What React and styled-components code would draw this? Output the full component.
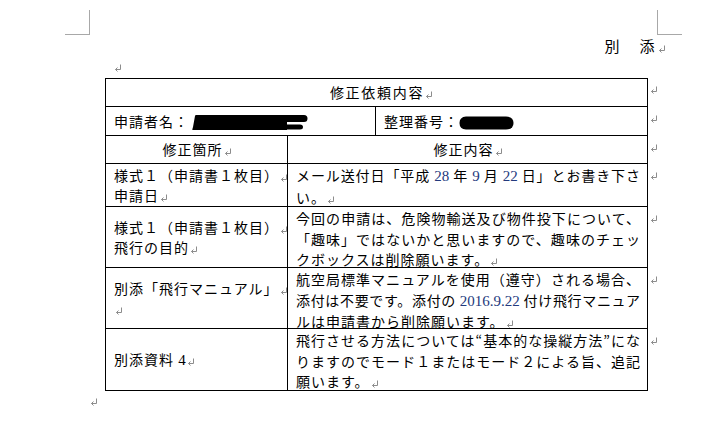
import React from "react";
import styled, { createGlobalStyle } from "styled-components";

const GlobalStyle = createGlobalStyle`
  html, body {
    margin: 0;
    padding: 0;
    background: #ffffff;
  }
  body {
    font-family: "Noto Sans CJK JP", "Noto Sans", sans-serif;
    font-weight: 400;
    color: #000;
    text-spacing-trim: space-all;
    text-autospace: no-autospace;
  }
`;

// page with the word-style margin corner marks
const Page = styled.div`
  position: relative;
  width: 568px;
  padding: 35px 0 0 89px;

  &::before,
  &::after {
    content: "";
    position: absolute;
    top: 10px;
    width: 24px;
    height: 24px;
    border-bottom: 1px solid #a8a8a8;
  }
  &::before {
    left: 65px;
    border-right: 1px solid #a8a8a8;
  }
  &::after {
    left: 657px;
    border-left: 1px solid #a8a8a8;
  }
`;

const Attachment = styled.p`
  margin: 0;
  height: 22px;
  line-height: 22px;
  font-size: 15px;
  letter-spacing: 2.5px;
  text-align: right;
`;

const BlankPara = styled.p`
  margin: 0;
  height: 21px;
  padding-left: ${(p) => p.$indent || 0}px;
  display: flex;
  align-items: center;
`;

const Table = styled.div`
  display: grid;
  grid-template-columns: 182px 88px 272px 16px;
  grid-template-rows: 29px 29px 28px 43px 61px 61px 62px;
  width: max-content;
  margin-left: 16px;
  border-left: 1px solid #000;
  font-size: 14px;
  letter-spacing: 1px;
  line-height: 20.5px;
`;

const Cell = styled.div`
  grid-column: ${(p) => p.$cols};
  display: flex;
  flex-direction: column;
  min-width: 0;
  padding: 0 7px 0 8px;
  border-right: 1px solid #000;
  border-bottom: 1px solid #000;
`;

const TitleCell = styled(Cell)`
  border-top: 1px solid #000;
  align-items: center;
  justify-content: center;
  letter-spacing: 1.7px;
`;

const FieldCell = styled(Cell)`
  justify-content: center;
`;

const HeadCell = styled(Cell)`
  align-items: center;
  justify-content: center;
`;

const PlaceCell = styled(Cell)`
  justify-content: center;
`;

const BodyCell = styled(Cell)`
  padding-top: 1px;
`;

const RowEnd = styled.div`
  grid-column: 4;
  display: flex;
  align-items: flex-start;
  padding: 8px 0 0 1px;
`;

const Line = styled.div`
  white-space: nowrap;
`;

const FillLine = styled.div`
  text-align: justify;
  text-align-last: justify;
  letter-spacing: 0;
`;

const Num = styled.span`
  font-family: "Liberation Serif", serif;
  font-size: 15px;
  letter-spacing: 0;
  color: ${(p) => (p.$blue ? "#23397d" : "inherit")};
`;

const MarkSvg = styled.svg`
  display: inline-block;
  flex: none;
  width: 8px;
  height: 8px;
  margin-left: 1px;
  margin-right: ${(p) => (p.$hang ? "-9px" : "0")};
  vertical-align: -1px;
`;

const Redaction = styled.svg`
  display: inline-block;
  margin-left: ${(p) => p.$gap}px;
  vertical-align: -3px;
`;

function ParaMark({ hang }) {
  return (
    <MarkSvg $hang={hang} viewBox="0 0 8 8">
      <path
        d="M6.5 0.5V5.5H1.5M3.5 3.5L1.5 5.5L3.5 7.5"
        fill="none"
        stroke="#8c8c8c"
        strokeWidth="1"
      />
    </MarkSvg>
  );
}

function NameBlot() {
  return (
    <Redaction $gap={3} width="116" height="15" viewBox="0 0 116 15">
      <path
        d="M4 0H112Q115.5 0 115.5 3.5Q115.5 7 112 7H95V9.5H108Q111 9.5 111 12Q111 14.5 108 14.5H95V15H0.5Q0 15 1 12L3 1Q3.3 0 4 0Z"
        fill="#000"
      />
    </Redaction>
  );
}

function NumberBlot() {
  return (
    <Redaction $gap={0} width="55" height="14" viewBox="0 0 55 14">
      <path
        d="M7 0.5H47Q54.5 1 54.5 7Q54.5 13.5 47 13.5H7Q0.5 13 0.5 7Q0.5 1 7 0.5Z"
        fill="#000"
      />
    </Redaction>
  );
}

export default function App() {
  return (
    <>
      <GlobalStyle />
      <Page>
        <Attachment>
          別　添
          <ParaMark hang />
        </Attachment>
        <BlankPara $indent={24}>
          <ParaMark />
        </BlankPara>

        <Table>
          <TitleCell $cols="1 / 4">
            <Line>
              修正依頼内容
              <ParaMark hang />
            </Line>
          </TitleCell>
          <RowEnd>
            <ParaMark />
          </RowEnd>

          <FieldCell $cols="1 / 3">
            <Line>
              申請者名：
              <NameBlot />
            </Line>
          </FieldCell>
          <FieldCell $cols="3 / 4">
            <Line>
              整理番号：
              <NumberBlot />
            </Line>
          </FieldCell>
          <RowEnd>
            <ParaMark />
          </RowEnd>

          <HeadCell $cols="1 / 2">
            <Line>
              修正箇所
              <ParaMark />
            </Line>
          </HeadCell>
          <HeadCell $cols="2 / 4">
            <Line>
              修正内容
              <ParaMark />
            </Line>
          </HeadCell>
          <RowEnd>
            <ParaMark />
          </RowEnd>

          <PlaceCell $cols="1 / 2">
            <Line>
              様式１（申請書１枚目）
              <ParaMark />
            </Line>
            <Line>
              申請日
              <ParaMark />
            </Line>
          </PlaceCell>
          <BodyCell $cols="2 / 4">
            <FillLine>
              メール送付日「平成 <Num $blue>28</Num> 年 <Num $blue>9</Num> 月{" "}
              <Num $blue>22</Num> 日」とお書き下さ
            </FillLine>
            <Line>
              い。
              <ParaMark />
            </Line>
          </BodyCell>
          <RowEnd>
            <ParaMark />
          </RowEnd>

          <PlaceCell $cols="1 / 2">
            <Line>
              様式１（申請書１枚目）
              <ParaMark />
            </Line>
            <Line>
              飛行の目的
              <ParaMark />
            </Line>
          </PlaceCell>
          <BodyCell $cols="2 / 4">
            <FillLine>今回の申請は、危険物輸送及び物件投下について、</FillLine>
            <FillLine>「趣味」ではないかと思いますので、趣味のチェッ</FillLine>
            <Line>
              クボックスは削除願います。
              <ParaMark />
            </Line>
          </BodyCell>
          <RowEnd>
            <ParaMark />
          </RowEnd>

          <PlaceCell $cols="1 / 2">
            <Line>
              別添「飛行マニュアル」
              <ParaMark />
            </Line>
            <Line>
              <ParaMark />
            </Line>
          </PlaceCell>
          <BodyCell $cols="2 / 4">
            <FillLine>航空局標準マニュアルを使用（遵守）される場合、</FillLine>
            <FillLine>
              添付は不要です。添付の <Num $blue>2016.9.22</Num> 付け飛行マニュア
            </FillLine>
            <Line>
              ルは申請書から削除願います。
              <ParaMark />
            </Line>
          </BodyCell>
          <RowEnd>
            <ParaMark />
          </RowEnd>

          <PlaceCell $cols="1 / 2">
            <Line>
              別添資料 <Num>4</Num>
              <ParaMark />
            </Line>
          </PlaceCell>
          <BodyCell $cols="2 / 4">
            <FillLine>飛行させる方法については“基本的な操縦方法”にな</FillLine>
            <FillLine>りますのでモード１またはモード２による旨、追記</FillLine>
            <Line>
              願います。
              <ParaMark />
            </Line>
          </BodyCell>
          <RowEnd>
            <ParaMark />
          </RowEnd>
        </Table>

        <BlankPara>
          <ParaMark />
        </BlankPara>
      </Page>
    </>
  );
}
